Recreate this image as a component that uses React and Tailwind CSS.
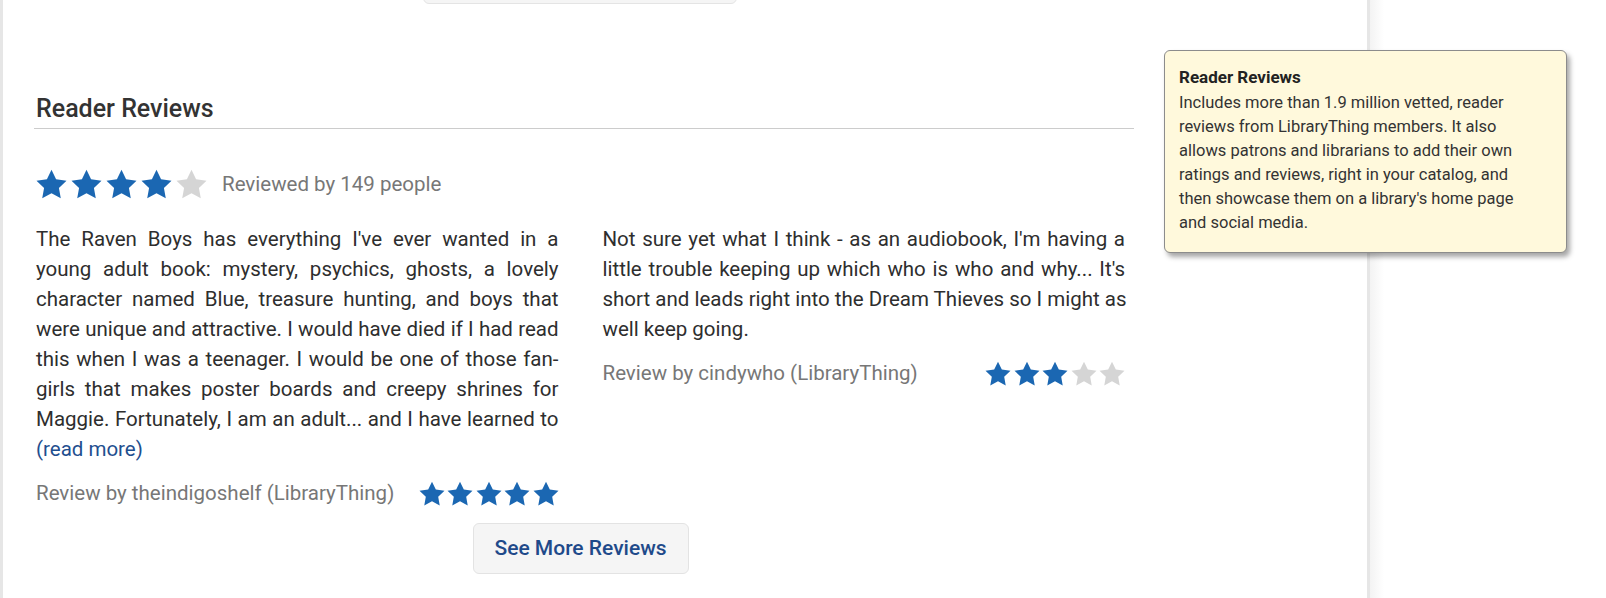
import React from 'react';

const STAR_PATH =
  'M12 .6l3.67 7.55 8.33 1.16-6.06 5.83 1.48 8.27L12 19.45l-7.42 3.96 1.48-8.27L0 9.31l8.33-1.16z';

function Stars({ count, size = 'lg' }) {
  const dims = size === 'lg' ? 'w-[31px] h-[30px]' : 'w-[26px] h-[25px]';
  return (
    <div className={size === 'lg' ? 'flex gap-[4px]' : 'flex gap-[2.5px]'}>
      {[0, 1, 2, 3, 4].map((i) => (
        <svg key={i} viewBox="0 0 24 24" className={dims}>
          <path d={STAR_PATH} fill={i < count ? '#1b67b2' : '#d5d5d5'} />
        </svg>
      ))}
    </div>
  );
}

// lines kept as in the catalog widget, last one left-aligned
const REVIEWS = [
  {
    id: 1,
    lines: [
      "The Raven Boys has everything I've ever wanted in a",
      'young adult book: mystery, psychics, ghosts, a lovely',
      'character named Blue, treasure hunting, and boys that',
      'were unique and attractive. I would have died if I had read',
      'this when I was a teenager. I would be one of those fan-',
      'girls that makes poster boards and creepy shrines for',
      'Maggie. Fortunately, I am an adult... and I have learned to',
    ],
    more: true,
    author: 'theindigoshelf',
    rating: 5,
  },
  {
    id: 2,
    lines: [
      "Not sure yet what I think - as an audiobook, I'm having a",
      "little trouble keeping up which who is who and why... It's",
      'short and leads right into the Dream Thieves so I might as',
      'well keep going.',
    ],
    more: false,
    author: 'cindywho',
    rating: 3,
  },
];

export default function App() {
  return (
    <div className="relative flex h-[598px] w-full overflow-hidden bg-white font-['Roboto',sans-serif] text-[#333]">
      {/* main panel */}
      <div className="w-[1370px] shrink-0 border-l-[3px] border-r-[3px] border-[#e6e6e6] pl-[31px]">
        {/* bottom of the previous section's button */}
        <div className="mt-[-36px] ml-[389px] h-[40px] w-[314px] rounded-[6px] border border-[#e4e4e4] bg-[#f5f5f5]"></div>

        <div className="w-[1100px]">
          <div className="mt-[90px] border-b border-[#cccccc] pb-[4px]">
            <h2 className="pl-[2px] text-[25px] font-medium leading-[30px] text-[#333]">Reader Reviews</h2>
          </div>

          <div className="ml-[2px] w-[1089px]">
            {/* overall rating */}
            <div className="mt-[39px] flex h-[32px] items-center">
              <Stars count={4} />
              <span className="ml-[15px] text-[20.5px] text-[#777]">Reviewed by 149 people</span>
            </div>

            {/* reviews */}
            <div className="mt-[24px] grid grid-cols-2 gap-[44px]">
              {REVIEWS.map((r) => (
                <div key={r.id}>
                  <div className="text-[20.5px] leading-[30px] text-[#2e2e2e]">
                    {r.lines.map((line, i) => {
                      const last = !r.more && i === r.lines.length - 1;
                      return (
                        <p
                          key={i}
                          className={last ? 'whitespace-nowrap' : 'whitespace-nowrap text-justify [text-align-last:justify]'}
                        >
                          {line}
                        </p>
                      );
                    })}
                    {r.more && (
                      <a href="#" className="block text-[#1f4f8f]">(read more)</a>
                    )}
                  </div>
                  <div className="mt-[14px] flex h-[30px] items-center justify-between">
                    <span className="text-[20.5px] text-[#777]">Review by {r.author} (LibraryThing)</span>
                    <Stars count={r.rating} size="sm" />
                  </div>
                </div>
              ))}
            </div>

            <div className="mt-[15px] flex justify-center">
              <button className="h-[51px] w-[216px] rounded-[6px] border border-[#e3e3e3] bg-[#f5f5f5] text-[21px] font-medium text-[#1f4a8a]">
                See More Reviews
              </button>
            </div>
          </div>
        </div>
      </div>

      {/* right rail */}
      <div className="flex-1 bg-gradient-to-r from-[#f3f3f3] to-white to-[14px]"></div>

      {/* tooltip */}
      <div className="absolute left-[1164px] top-[50px] w-[403px] rounded-[6px] border border-[#8c8c8c] bg-[#fff9dc] px-[14px] pb-[17px] pt-[14px] text-[16.5px] leading-[24px] text-[#333] shadow-[3px_4px_5px_rgba(0,0,0,0.35)]">
        <div className="mb-[2px] text-[17px] font-bold text-[#222]">Reader Reviews</div>
        <p>
          Includes more than 1.9 million vetted, reader
          <br />
          reviews from LibraryThing members. It also
          <br />
          allows patrons and librarians to add their own
          <br />
          ratings and reviews, right in your catalog, and
          <br />
          then showcase them on a library's home page
          <br />
          and social media.
        </p>
      </div>
    </div>
  );
}
